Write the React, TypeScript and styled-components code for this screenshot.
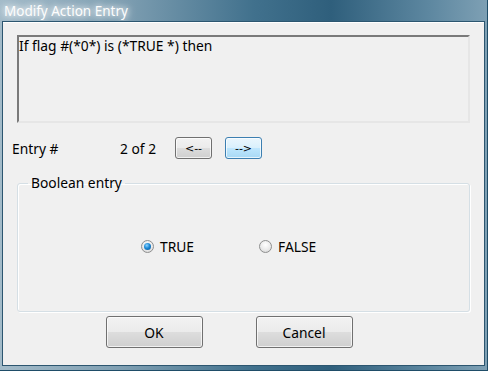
import { FC } from 'react';
import styled, { createGlobalStyle } from 'styled-components';

const GlobalStyle = createGlobalStyle`
  html, body {
    margin: 0;
    padding: 0;
    background: #f0f0f0;
  }
  body {
    font-family: 'Noto Sans', 'Open Sans', sans-serif;
    font-size: 13.8px;
    color: #000;
  }
`;

const Window = styled.div`
  width: 488px;
  height: 371px;
  display: flex;
  flex-direction: column;
  background: linear-gradient(90deg, #a3bbc9 0%, #7f9fb2 25%, #41718d 52%, #2f5f7c 68%, #5d87a0 88%, #7ea0b4 100%);
  box-sizing: border-box;
  border-bottom: 1px solid #1f4d68;
  border-right: 1px solid #1f4d68;
  overflow: hidden;
`;

const TitleBar = styled.div`
  height: 21px;
  flex: none;
  display: flex;
  align-items: center;
  padding-left: 4px;
  font-size: 13.5px;
  text-shadow: 0 0 6px #fff, 0 0 10px rgba(255, 255, 255, 0.85);
`;

const TitleText = styled.span`
  color: #fdfdfd;
`;

const Client = styled.div`
  flex: 1;
  margin: 0 2px 4px 2px;
  border: 1px solid #2c5670;
  box-shadow: inset 0 1px 0 #ffffff;
  background: #f0f0f0;
  display: flex;
  flex-direction: column;
  padding: 13px 13px 0 13px;
`;

const TextBox = styled.div`
  height: 83px;
  border-top: 2px solid #7a7a7a;
  border-left: 2px solid #7a7a7a;
  border-right: 2px solid #e6e6e6;
  border-bottom: 2px solid #e6e6e6;
  padding: 1px 0 0 0;
  line-height: 16px;
  margin: 0 1px;
`;

const EntryRow = styled.div`
  display: flex;
  align-items: center;
  height: 22px;
  margin-top: 14px;
  margin-left: -4px;
`;

const EntryLabel = styled.span`
  width: 108px;
`;

const EntryCount = styled.span`
  width: 55px;
`;

const SmallButton = styled.button<{ focused?: boolean }>`
  width: 37px;
  height: 22px;
  margin-right: 13px;
  padding: 0;
  font-family: 'DejaVu Sans', 'Noto Sans', sans-serif;
  font-size: 11px;
  color: #000;
  border-radius: 3px;
  border: 1px solid ${({ focused }) => (focused ? '#3c7fb1' : '#707070')};
  background: ${({ focused }) =>
    focused
      ? 'linear-gradient(180deg, #eaf6fd 0%, #d9f0fc 50%, #bee6fd 51%, #a7d9f5 100%)'
      : 'linear-gradient(180deg, #f2f2f2 0%, #ebebeb 50%, #dddddd 51%, #cfcfcf 100%)'};
  box-shadow: inset 0 0 0 1px rgba(255, 255, 255, 0.7);
`;

const GroupBox = styled.fieldset`
  margin: 17px 1px 0 1px;
  height: 136px;
  box-sizing: border-box;
  border: 1px solid #d5dfe5;
  border-radius: 3px;
  box-shadow: inset 1px 1px 0 #ffffff, 1px 1px 0 #ffffff;
  padding: 0;
  display: block;
`;

const GroupLabel = styled.legend`
  margin-left: 10px;
  padding: 0 3px;
  line-height: 14px;
`;

const RadioRow = styled.div`
  display: flex;
  align-items: center;
  padding-left: 123px;
  margin-top: 47px;
`;

const RadioItem = styled.label`
  display: flex;
  align-items: center;
  gap: 6px;
  width: 118px;
`;

const RadioCircle = styled.span<{ checked?: boolean }>`
  width: 13px;
  height: 13px;
  box-sizing: border-box;
  border-radius: 50%;
  border: 1px solid #8e8f8f;
  background: radial-gradient(circle at 50% 35%, #ffffff 0%, #e8e8e8 60%, #cfcfcf 100%);
  display: flex;
  align-items: center;
  justify-content: center;

  &::after {
    content: '';
    display: ${({ checked }) => (checked ? 'block' : 'none')};
    width: 7px;
    height: 7px;
    border-radius: 50%;
    background: radial-gradient(circle at 40% 35%, #8fd3ff 0%, #1c8ad6 45%, #0a4f8f 100%);
  }
`;

const ButtonRow = styled.div`
  display: flex;
  justify-content: center;
  gap: 53px;
  margin-top: 4px;
  margin-left: -29px;
`;

const DialogButton = styled.button`
  width: 97px;
  height: 32px;
  padding: 0;
  font-family: 'Noto Sans', 'Open Sans', sans-serif;
  font-size: 13.8px;
  color: #000;
  border-radius: 3px;
  border: 1px solid #707070;
  background: linear-gradient(180deg, #f2f2f2 0%, #ebebeb 50%, #dddddd 51%, #cfcfcf 100%);
  box-shadow: inset 0 0 0 1px rgba(255, 255, 255, 0.7);
`;

const App: FC = () => {
  return (
    <>
      <GlobalStyle />
      <Window>
        <TitleBar>
          <TitleText>Modify Action Entry</TitleText>
        </TitleBar>
        <Client>
          <TextBox>If flag #(*0*) is (*TRUE *) then</TextBox>
          <EntryRow>
            <EntryLabel>Entry #</EntryLabel>
            <EntryCount>2 of 2</EntryCount>
            <SmallButton>&lt;--</SmallButton>
            <SmallButton focused>--&gt;</SmallButton>
          </EntryRow>
          <GroupBox>
            <GroupLabel>Boolean entry</GroupLabel>
            <RadioRow>
              <RadioItem>
                <RadioCircle checked />
                TRUE
              </RadioItem>
              <RadioItem>
                <RadioCircle />
                FALSE
              </RadioItem>
            </RadioRow>
          </GroupBox>
          <ButtonRow>
            <DialogButton>OK</DialogButton>
            <DialogButton>Cancel</DialogButton>
          </ButtonRow>
        </Client>
      </Window>
    </>
  );
};

export default App;
